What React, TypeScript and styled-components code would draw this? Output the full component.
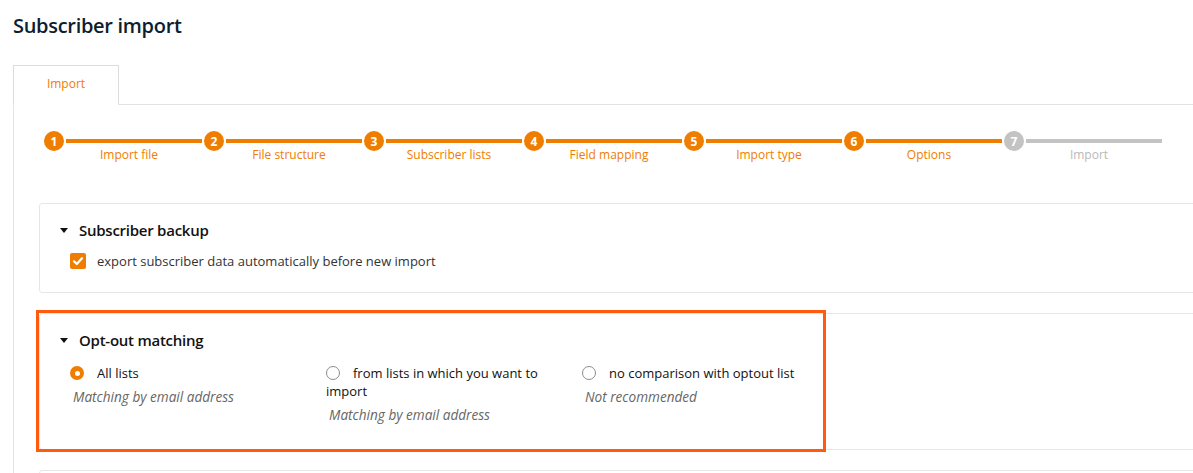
import React from "react";
import styled, { createGlobalStyle } from "styled-components";

const ORANGE = "#ef7d00";
const GREY = "#c3c3c3";

const Global = createGlobalStyle`
  html, body { margin: 0; padding: 0; background: #fff; }
  body {
    font-family: "Open Sans", "Liberation Sans", Arial, sans-serif;
    overflow: hidden;
    -webkit-font-smoothing: antialiased;
  }
`;

const Page = styled.div`
  width: 1240px;
  padding: 12px 0 0 13px;
  box-sizing: border-box;
`;

const Title = styled.h1`
  margin: 0;
  font-size: 20px;
  line-height: 28px;
  font-weight: 600;
  letter-spacing: -0.3px;
  color: #0e1d2f;
`;

const TabBar = styled.div`
  margin-top: 25px;
  display: flex;
  border-bottom: 1px solid #e2e2e2;
`;

const Tab = styled.div`
  box-sizing: border-box;
  width: 106px;
  height: 40px;
  margin-bottom: -1px;
  border: 1px solid #dcdcdc;
  border-bottom: 1px solid #fff;
  background: #fff;
  display: flex;
  align-items: center;
  justify-content: center;
  font-size: 12px;
  color: ${ORANGE};
  padding-bottom: 3px;
`;

const TabPanel = styled.div`
  border-left: 1px solid #e3e3e3;
  padding: 26px 0 0 0;
  min-height: 400px;
`;

const Stepper = styled.div`
  display: flex;
  margin-left: 30px;
`;

const Step = styled.div`
  width: 160px;
  display: flex;
  flex-direction: column;
`;

const StepTop = styled.div`
  display: flex;
  align-items: center;
  height: 20px;
`;

const Circle = styled.div<{ $active: boolean }>`
  width: 20px;
  height: 20px;
  border-radius: 50%;
  background: ${(p) => (p.$active ? ORANGE : GREY)};
  color: #fff;
  font-size: 12px;
  font-weight: 700;
  display: flex;
  align-items: center;
  justify-content: center;
  flex: none;
`;

const Line = styled.div<{ $active: boolean }>`
  flex: 1;
  height: 4px;
  margin: 0 2px;
  background: ${(p) => (p.$active ? ORANGE : GREY)};
`;

const StepLabel = styled.div<{ $active: boolean }>`
  margin-top: -4px;
  padding-left: 10px;
  text-align: center;
  font-size: 12px;
  line-height: 16px;
  color: ${(p) => (p.$active ? ORANGE : "#b9b9b9")};
`;

const Panel = styled.section<{ $first?: boolean; $pb: number }>`
  position: relative;
  margin: ${(p) => (p.$first ? "40px" : "20px")} -40px 0 25px;
  border: 1px solid #e6e6e6;
  border-radius: 3px;
  padding: 16px 20px ${(p) => p.$pb}px;
`;

const PanelTitle = styled.div`
  display: flex;
  align-items: center;
  font-size: 15px;
  line-height: 20px;
  font-weight: 600;
  letter-spacing: -0.25px;
  color: #111;
`;

const Caret = styled.span`
  width: 0;
  height: 0;
  border-left: 4.5px solid transparent;
  border-right: 4.5px solid transparent;
  border-top: 5px solid #111;
  margin-right: 11px;
`;

const CheckRow = styled.label`
  margin-top: 12px;
  padding-left: 10px;
  display: flex;
  align-items: center;
  gap: 11px;
  font-size: 13px;
  line-height: 18px;
  color: #333;
`;

const CheckBox = styled.span`
  width: 16px;
  height: 16px;
  border-radius: 2px;
  background: ${ORANGE};
  display: flex;
  align-items: center;
  justify-content: center;
`;

const RadioGrid = styled.div`
  margin-top: 14px;
  padding-left: 10px;
  display: grid;
  grid-template-columns: repeat(3, 256px);
`;

const Option = styled.div`
  padding-right: 20px;
`;

const OptionLabel = styled.div`
  font-size: 13px;
  line-height: 18px;
  color: #111;
`;

const Radio = styled.span<{ $checked: boolean }>`
  display: inline-block;
  box-sizing: border-box;
  width: 14px;
  height: 14px;
  border-radius: 50%;
  vertical-align: -2px;
  margin-right: 13px;
  position: relative;
  background: ${(p) => (p.$checked ? ORANGE : "#fff")};
  border: ${(p) => (p.$checked ? "none" : "1px solid #8c8c8c")};
  &::after {
    content: "";
    display: ${(p) => (p.$checked ? "block" : "none")};
    position: absolute;
    left: 4.5px;
    top: 4.5px;
    width: 5px;
    height: 5px;
    border-radius: 50%;
    background: #fff;
  }
`;

const Hint = styled.div`
  margin-top: 6px;
  padding-left: 3px;
  font-size: 13.6px;
  line-height: 18px;
  font-style: italic;
  color: #666;
`;

const Highlight = styled.div`
  position: absolute;
  left: -4px;
  top: -4px;
  width: 790px;
  height: 142px;
  box-sizing: border-box;
  border: 3px solid #ff5a0d;
  pointer-events: none;
`;

const steps = [
  "Import file",
  "File structure",
  "Subscriber lists",
  "Field mapping",
  "Import type",
  "Options",
  "Import",
];

const options = [
  { label: "All lists", hint: "Matching by email address", checked: true },
  { label: "from lists in which you want to import", hint: "Matching by email address", checked: false },
  { label: "no comparison with optout list", hint: "Not recommended", checked: false },
];

export default function App() {
  return (
    <>
      <Global />
      <Page>
        <Title>Subscriber import</Title>
        <TabBar>
          <Tab>Import</Tab>
        </TabBar>
        <TabPanel>
          <Stepper>
            {steps.map((s, i) => {
              const active = i < 6;
              return (
                <Step key={s}>
                  <StepTop>
                    <Circle $active={active}>{i + 1}</Circle>
                    <Line $active={active} />
                  </StepTop>
                  <StepLabel $active={active}>{s}</StepLabel>
                </Step>
              );
            })}
          </Stepper>

          <Panel $first $pb={22}>
            <PanelTitle>
              <Caret />
              Subscriber backup
            </PanelTitle>
            <CheckRow>
              <CheckBox>
                <svg width="12" height="12" viewBox="0 0 12 12">
                  <path d="M2 6.3 L4.8 9 L10 3.2" fill="none" stroke="#fff" strokeWidth="2.2" strokeLinecap="round" strokeLinejoin="round" />
                </svg>
              </CheckBox>
              export subscriber data automatically before new import
            </CheckRow>
          </Panel>

          <Panel $pb={25}>
            <PanelTitle>
              <Caret />
              Opt-out matching
            </PanelTitle>
            <RadioGrid>
              {options.map((o) => (
                <Option key={o.label}>
                  <OptionLabel>
                    <Radio $checked={o.checked} />
                    {o.label}
                  </OptionLabel>
                  <Hint>{o.hint}</Hint>
                </Option>
              ))}
            </RadioGrid>
            <Highlight />
          </Panel>

          <Panel $pb={60} />
        </TabPanel>
      </Page>
    </>
  );
}
